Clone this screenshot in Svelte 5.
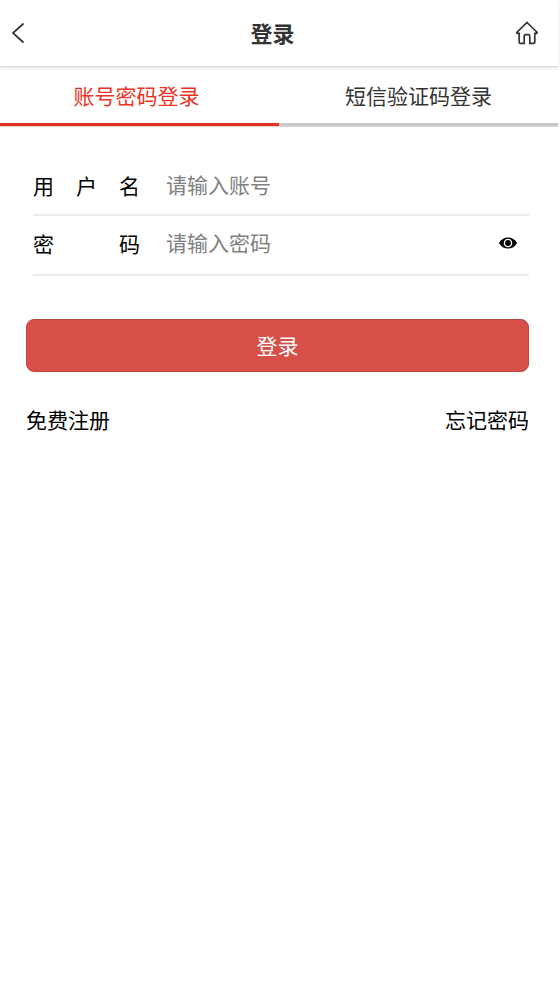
<script lang="ts">
    const tabs = ["账号密码登录", "短信验证码登录"];

    let activeTab = $state(0);
    let account = $state("");
    let password = $state("");
    let showPassword = $state(false);

    function submit(e) {
        e.preventDefault();
    }
</script>

<div class="page">
    <header class="header">
        <button class="back" type="button" aria-label="返回">
            <svg width="14" height="22" viewBox="0 0 14 22">
                <path d="M12.5 1.5 L2 11 L12.5 20.5" />
            </svg>
        </button>
        <h1>登录</h1>
        <a class="home" href="#home" aria-label="首页">
            <svg width="24" height="24" viewBox="0 0 24 24">
                <path
                    d="M12 1.5 L22 11.2 Q22.6 12.4 21.3 12.4 H19.8 V21.2 Q19.8 22.3 18.7 22.3 H14.8 V15.2 Q14.8 13.6 13.2 13.6 H10.8 Q9.2 13.6 9.2 15.2 V22.3 H5.3 Q4.2 22.3 4.2 21.2 V12.4 H2.7 Q1.4 12.4 2 11.2 Z"
                />
            </svg>
        </a>
    </header>

    <nav class="tabs">
        {#each tabs as tab, i}
            <button
                type="button"
                class="tab"
                class:active={activeTab === i}
                onclick={() => (activeTab = i)}
            >
                {tab}
            </button>
        {/each}
    </nav>

    <form onsubmit={submit}>
        <div class="fields">
            <div class="field">
                <label for="account">
                    <span>用</span><span>户</span><span>名</span>
                </label>
                <input
                    id="account"
                    type="text"
                    placeholder="请输入账号"
                    bind:value={account}
                />
            </div>
            <div class="field">
                <label for="password"><span>密</span><span>码</span></label>
                <input
                    id="password"
                    type={showPassword ? "text" : "password"}
                    placeholder="请输入密码"
                    bind:value={password}
                />
                <button
                    class="eye"
                    type="button"
                    aria-label="显示密码"
                    onclick={() => (showPassword = !showPassword)}
                >
                    <svg width="18" height="12" viewBox="0 0 18 12">
                        <path
                            d="M0 6 C2 2.2 5.2 0.4 9 0.4 S16 2.2 18 6 C16 9.8 12.8 11.6 9 11.6 S2 9.8 0 6 Z"
                        />
                        <circle class="ring" cx="9" cy="6" r="3.6" />
                    </svg>
                </button>
            </div>
        </div>

        <button class="submit" type="submit">登录</button>

        <div class="links">
            <a href="#register">免费注册</a>
            <a href="#forgot">忘记密码</a>
        </div>
    </form>
</div>

<style>
    :global(body) {
        margin: 0;
        background: #fff;
    }

    .page {
        padding-right: 2px;
        font-family: "Noto Sans CJK SC", sans-serif;
        font-size: 21px;
        line-height: 30px;
        color: #000;
    }

    button,
    input {
        margin: 0;
        padding: 0;
        border: 0;
        background: none;
        font: inherit;
        color: inherit;
    }

    button {
        cursor: pointer;
    }

    svg {
        display: block;
    }

    .header {
        display: flex;
        align-items: center;
        justify-content: space-between;
        height: 66px;
        padding: 0 19px 0 11px;
        border-bottom: 1px solid #dcdcdc;
        box-shadow: 0 1px 4px rgba(0, 0, 0, 0.12);
    }

    h1 {
        margin: 0;
        padding-bottom: 2px;
        font-size: 22px;
        font-weight: bold;
        color: #333;
    }

    .back {
        width: 19px;
    }

    .header path {
        fill: none;
        stroke: #333;
        stroke-width: 1.7;
    }

    .tabs {
        display: grid;
        grid-template-columns: 1fr 1fr;
        border-bottom: 1px solid #d8d8d8;
    }

    .tab {
        height: 59px;
        border-bottom: 3px solid #c8c8c8;
        color: #333;
    }

    .tab.active {
        padding-right: 6px;
        border-bottom-color: #e23325;
        color: #ee3325;
    }

    form {
        padding: 29px 29px 0 26px;
    }

    .fields {
        padding-left: 7px;
    }

    .field {
        display: flex;
        align-items: center;
        height: 58px;
        border-bottom: 2px solid #ebebeb;
    }

    .field + .field {
        height: 54px;
        padding-bottom: 4px;
    }

    label {
        display: flex;
        justify-content: space-between;
        width: 107px;
        margin-right: 26px;
    }

    input {
        flex: 1;
        min-width: 0;
        padding-bottom: 2px;
        outline: none;
    }

    input::placeholder {
        color: #808080;
        opacity: 1;
    }

    .eye {
        padding: 6px 12px;
    }

    .ring {
        fill: #000;
        stroke: #fff;
        stroke-width: 1.4;
    }

    .submit {
        display: block;
        width: 100%;
        height: 53px;
        margin-top: 43px;
        padding-bottom: 2px;
        border: 1px solid #bf4742;
        border-radius: 8px;
        background: #d65049;
        color: #fff;
    }

    .links {
        display: flex;
        justify-content: space-between;
        margin-top: 32px;
    }

    .links a {
        color: #000;
        text-decoration: none;
    }
</style>
